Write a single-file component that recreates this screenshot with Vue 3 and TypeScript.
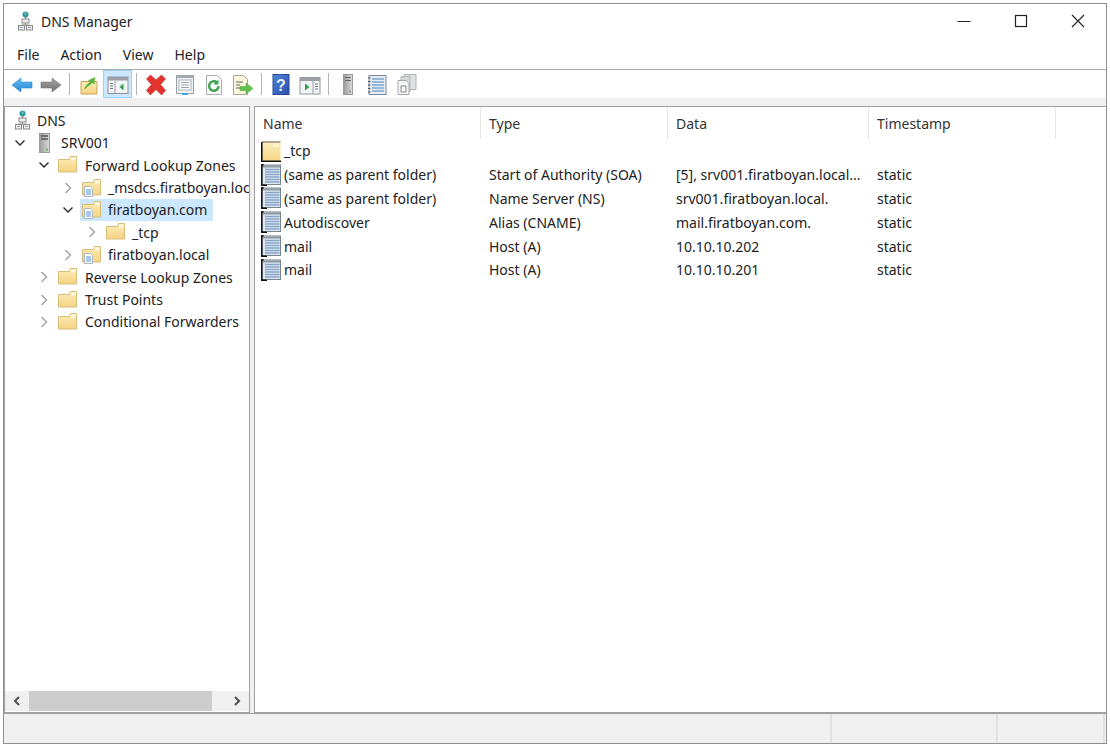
<script setup lang="ts">
interface TreeRow { level: number; chevron: '' | 'open' | 'closed'; icon: string; label: string; selected?: boolean }
interface Rec { icon: string; name: string; type: string; data: string; time: string }
type Tool = { id: string; active?: boolean } | { sep: true }

const menus = ['File', 'Action', 'View', 'Help']

const tools: Tool[] = [
  { id: 't-back' }, { id: 't-forward' }, { sep: true },
  { id: 't-up' }, { id: 't-tree', active: true }, { sep: true },
  { id: 't-delete' }, { id: 't-props' }, { id: 't-refresh' }, { id: 't-export' }, { sep: true },
  { id: 't-help' }, { id: 't-pane' }, { sep: true },
  { id: 't-server' }, { id: 't-list' }, { id: 't-copy' },
]

const tree: TreeRow[] = [
  { level: 0, chevron: '', icon: 'dns', label: 'DNS' },
  { level: 1, chevron: 'open', icon: 'server', label: 'SRV001' },
  { level: 2, chevron: 'open', icon: 'folder', label: 'Forward Lookup Zones' },
  { level: 3, chevron: 'closed', icon: 'zone', label: '_msdcs.firatboyan.local' },
  { level: 3, chevron: 'open', icon: 'zone', label: 'firatboyan.com', selected: true },
  { level: 4, chevron: 'closed', icon: 'folder', label: '_tcp' },
  { level: 3, chevron: 'closed', icon: 'zone', label: 'firatboyan.local' },
  { level: 2, chevron: 'closed', icon: 'folder', label: 'Reverse Lookup Zones' },
  { level: 2, chevron: 'closed', icon: 'folder', label: 'Trust Points' },
  { level: 2, chevron: 'closed', icon: 'folder', label: 'Conditional Forwarders' },
]

const columns = ['Name', 'Type', 'Data', 'Timestamp']

const records: Rec[] = [
  { icon: 'bigfolder', name: '_tcp', type: '', data: '', time: '' },
  { icon: 'record', name: '(same as parent folder)', type: 'Start of Authority (SOA)', data: '[5], srv001.firatboyan.local...', time: 'static' },
  { icon: 'record', name: '(same as parent folder)', type: 'Name Server (NS)', data: 'srv001.firatboyan.local.', time: 'static' },
  { icon: 'record', name: 'Autodiscover', type: 'Alias (CNAME)', data: 'mail.firatboyan.com.', time: 'static' },
  { icon: 'record', name: 'mail', type: 'Host (A)', data: '10.10.10.202', time: 'static' },
  { icon: 'record', name: 'mail', type: 'Host (A)', data: '10.10.10.201', time: 'static' },
]
</script>

<template>
  <div class="window">
    <svg class="defs" xmlns="http://www.w3.org/2000/svg">
      <defs>
        <linearGradient id="g-folder" x1="0" y1="0" x2="0" y2="1">
          <stop offset="0" stop-color="#fcecb8" /><stop offset="1" stop-color="#f5d483" />
        </linearGradient>
        <linearGradient id="g-blue" x1="0" y1="0" x2="0" y2="1">
          <stop offset="0" stop-color="#6cc0f2" /><stop offset="1" stop-color="#1f86d6" />
        </linearGradient>
        <linearGradient id="g-grey" x1="0" y1="0" x2="0" y2="1">
          <stop offset="0" stop-color="#a8a8a8" /><stop offset="1" stop-color="#6e6e6e" />
        </linearGradient>
        <linearGradient id="g-help" x1="0" y1="0" x2="1" y2="1">
          <stop offset="0" stop-color="#4f86dc" /><stop offset="1" stop-color="#2a4ea6" />
        </linearGradient>
        <linearGradient id="g-tower" x1="0" y1="0" x2="1" y2="0">
          <stop offset="0" stop-color="#9a9a9a" /><stop offset="1" stop-color="#dcdcdc" />
        </linearGradient>

        <symbol id="dns" viewBox="0 0 15 20">
          <circle cx="7.5" cy="3.4" r="3" fill="#2c93a3" />
          <path d="M5.5 1.6h4L7.5 5z" fill="#58c2a8" />
          <path d="M7.5 6v2" stroke="#9a8b6a" stroke-width="1.4" />
          <rect x="4" y="8" width="7" height="4" fill="#eee" stroke="#8a8a8a" />
          <path d="M7.5 12v2M3.500 14h8" stroke="#8a8a8a" fill="none" />
          <rect x="0.5" y="14.5" width="6" height="4.5" fill="#eee" stroke="#8a8a8a" />
          <rect x="8.5" y="14.5" width="6" height="4.5" fill="#eee" stroke="#8a8a8a" />
          <path d="M2 16.5h3M10 16.5h3" stroke="#8fa8b8" />
        </symbol>
        <symbol id="server" viewBox="0 0 20 20">
          <rect x="5.500" y="0.500" width="10" height="19" fill="url(#g-tower)" stroke="#9a9a9a" />
          <path d="M7 3h7M7 6h7" stroke="#555" stroke-width="1.3" />
          <circle cx="13" cy="16.500" r="1.100" fill="#56b947" />
        </symbol>
        <symbol id="folder" viewBox="0 0 20 20">
          <path d="M0.500 4.500h11l1-3h6v15.500H0.500z" fill="url(#g-folder)" stroke="#d8bd7a" />
          <path d="M13 2.500h5v3h-5z" fill="#fff8e2" />
        </symbol>
        <symbol id="zone" viewBox="0 0 20 20">
          <path d="M0.500 4.500h11l1-3h6v15.500H0.500z" fill="url(#g-folder)" stroke="#d8bd7a" />
          <path d="M13 2.500h5v3h-5z" fill="#fff8e2" />
          <path d="M2.500 8.500h6l2 2v8h-8z" fill="#fff" stroke="#aab4be" />
          <path d="M4 12h5M4 14h5M4 16h5" stroke="#4f93d0" />
        </symbol>
        <symbol id="bigfolder" viewBox="0 0 20 22">
          <path d="M0.800 21V3h18.700v18z" fill="url(#g-folder)" />
          <path d="M12 3h6v4h-6z" fill="#fff3c9" />
          <path d="M0.800 2v19.200H20" fill="none" stroke="#111" stroke-width="1.600" />
          <path d="M1 2h18.500" stroke="#5c4a20" />
        </symbol>
        <symbol id="record" viewBox="0 0 20 22">
          <rect x="1" y="1" width="18.500" height="19.500" fill="#dfe7f0" stroke="#77838f" />
          <path d="M1.500 2.500h17.500" stroke="#8f9aa5" stroke-width="2" />
          <path d="M4 5.500h14.500M4 8h14.500M4 10.500h14.500M4 13h14.500M4 15.500h14.500M4 18h14.500" stroke="#86a7c9" stroke-width="1.300" />
          <path d="M2.600 0.800H0.800v20.400H6" fill="none" stroke="#111" stroke-width="1.500" />
        </symbol>

        <symbol id="t-back" viewBox="0 0 22 22">
          <path d="M1 11l9-7v4h11v6H10v4z" fill="url(#g-blue)" stroke="#2b86cf" stroke-width="0.600" />
        </symbol>
        <symbol id="t-forward" viewBox="0 0 22 22">
          <path d="M21 11l-9-7v4H1v6h11v4z" fill="url(#g-grey)" stroke="#777" stroke-width="0.600" />
        </symbol>
        <symbol id="t-up" viewBox="0 0 22 22">
          <path d="M3 7.500h16v12.500H3z" fill="url(#g-folder)" stroke="#c7a557" />
          <path d="M6 16c1-4 3-6 6-8l-2-1.500 7-3.500-.5 7.500-2-1.500C12 11 9 13 6 16z" fill="#5fb53c" />
        </symbol>
        <symbol id="t-tree" viewBox="0 0 22 22">
          <rect x="1" y="3" width="20" height="16.500" fill="#f2f5f7" stroke="#8d949b" />
          <path d="M1 3h20v3.500H1z" fill="#9aa0a6" />
          <path d="M8 7v12.500" stroke="#9aa1a8" />
          <path d="M3 9.500h3M3 12h3M3 14.500h3" stroke="#778" />
          <path d="M16.500 9.500v7l-4-3.500z" fill="#2f9e44" />
        </symbol>
        <symbol id="t-delete" viewBox="0 0 22 22">
          <path d="M1.500 5l4-4L11 6 16.500 1l4 4L15.500 10.500l5 6-4 4.500L11 15.500 5.500 21l-4-4.500L6.500 10.500z" fill="#e2332c" stroke="#c22a24" stroke-width="0.600" stroke-linejoin="round" />
        </symbol>
        <symbol id="t-props" viewBox="0 0 22 22">
          <rect x="2.500" y="1.500" width="17" height="18" fill="#eef1f3" stroke="#9aa1a6" />
          <path d="M2.500 1.500h17v2.500h-17z" fill="#a6acb1" />
          <rect x="5" y="6" width="12" height="10" fill="#fff" stroke="#adb3b8" />
          <path d="M7 8.500h8M7 11h8M7 13.500h8" stroke="#98a2ac" />
          <rect x="8" y="19" width="6" height="2" fill="#39a7e0" />
        </symbol>
        <symbol id="t-refresh" viewBox="0 0 22 22">
          <path d="M3.500 1.500h11l4 4v15h-15z" fill="#fafafa" stroke="#a8aeb2" />
          <path d="M15.500 12a4.700 4.700 0 1 1-1.600-3.500" fill="none" stroke="#3fa551" stroke-width="2.400" />
          <path d="M15.500 5.500v5h-5z" fill="#3fa551" />
        </symbol>
        <symbol id="t-export" viewBox="0 0 22 22">
          <path d="M1.500 1.500h10l4 4v15h-14z" fill="#fbf6dc" stroke="#a8a894" />
          <path d="M4 8h7M4 11h4M4 14h4" stroke="#666" />
          <path d="M8 12.500h6V9l7 5.500-7 5.500v-3.500H8z" fill="#62bf52" stroke="#46a23d" stroke-width="0.500" />
        </symbol>
        <symbol id="t-help" viewBox="0 0 22 22">
          <rect x="3" y="0.500" width="16" height="20" fill="url(#g-help)" stroke="#2a4a98" />
          <text x="11" y="16.500" text-anchor="middle" font-family="Liberation Sans, sans-serif" font-weight="700" font-size="16" fill="#e8eefc">?</text>
        </symbol>
        <symbol id="t-pane" viewBox="0 0 22 22">
          <rect x="1" y="3.500" width="20" height="16.500" fill="#f2f5f7" stroke="#8d949b" />
          <path d="M1 3.500h20V7H1z" fill="#9aa0a6" />
          <path d="M14 7v13" stroke="#9aa1a8" />
          <path d="M16 10h3M16 12.500h3M16 15h3" stroke="#778" />
          <path d="M6 9.500v7l4.500-3.500z" fill="#2f9e44" />
        </symbol>
        <symbol id="t-server" viewBox="0 0 22 22">
          <rect x="6.500" y="0.500" width="9" height="20" fill="url(#g-tower)" stroke="#9a9a9a" />
          <path d="M8 3.500h6M8 6.500h6" stroke="#666" stroke-width="1.200" />
          <circle cx="13" cy="17.500" r="0.900" fill="#8a8a8a" />
        </symbol>
        <symbol id="t-list" viewBox="0 0 22 22">
          <rect x="3" y="1.500" width="17" height="19" fill="#e4edf6" stroke="#7a8b9c" />
          <path d="M6 5h12M6 8h12M6 11h12M6 14h12M6 17h12" stroke="#7ba4cc" stroke-width="1.300" />
          <path d="M2 4h2.500M2 7.500h2.500M2 11h2.500M2 14.500h2.500M2 18h2.500" stroke="#555" stroke-width="1.100" />
        </symbol>
        <symbol id="t-copy" viewBox="0 0 22 22">
          <path d="M9 0.500h12v15H9z" fill="#e0e2e3" stroke="#b0b4b7" />
          <path d="M6 2.500h9v15H6z" fill="#d6d8da" stroke="#b0b4b7" />
          <path d="M3 6.500h8l3 3v11H3z" fill="#f5f5f5" stroke="#a4a8ab" />
          <path d="M6 12h5v6H6z" fill="none" stroke="#8a8a8a" />
        </symbol>
      </defs>
    </svg>

    <header class="titlebar">
      <svg class="title-icon"><use href="#dns" /></svg>
      <span class="title">DNS Manager</span>
      <div class="win-controls">
        <svg class="ctl" viewBox="0 0 14 14"><path d="M0.500 7.500h13" stroke="#222" /></svg>
        <svg class="ctl" viewBox="0 0 14 14"><rect x="1.500" y="1.500" width="11" height="11" fill="none" stroke="#222" stroke-width="1.200" /></svg>
        <svg class="ctl" viewBox="0 0 14 14"><path d="M1 1l12 12M13 1L1 13" stroke="#222" stroke-width="1.100" /></svg>
      </div>
    </header>

    <nav class="menubar">
      <span v-for="m in menus" :key="m" class="menu">{{ m }}</span>
    </nav>

    <div class="toolbar">
      <template v-for="(t, i) in tools" :key="i">
        <span v-if="'sep' in t" class="sep"></span>
        <span v-else class="tool" :class="{ active: t.active }">
          <svg class="tool-icon"><use :href="'#' + t.id" /></svg>
        </span>
      </template>
    </div>

    <main class="panes">
      <aside class="left">
        <ul class="tree">
          <li v-for="r in tree" :key="r.label" class="tree-row" :class="'lvl-' + r.level">
            <span v-if="r.level > 0" class="chev">
              <svg v-if="r.chevron === 'open'" viewBox="0 0 10 10" class="chev-svg"><path d="M0.500 2.500L5 7l4.500-4.500" fill="none" stroke="#333" stroke-width="1.500" /></svg>
              <svg v-else viewBox="0 0 10 10" class="chev-svg"><path d="M2.500 0L7.500 5l-5 5" fill="none" stroke="#a6a6a6" stroke-width="1.500" /></svg>
            </span>
            <span class="node" :class="{ selected: r.selected }">
              <svg class="node-icon" :class="{ 'dns-icon': r.icon === 'dns' }"><use :href="'#' + r.icon" /></svg>
              <span class="node-label">{{ r.label }}</span>
            </span>
          </li>
        </ul>
        <div class="hscroll">
          <span class="sb-btn">
            <svg viewBox="0 0 10 10" class="sb-svg"><path d="M7 1L3 5l4 4" fill="none" stroke="#505050" stroke-width="2" /></svg>
          </span>
          <span class="sb-thumb"></span>
          <span class="sb-btn sb-end">
            <svg viewBox="0 0 10 10" class="sb-svg"><path d="M3 1l4 4-4 4" fill="none" stroke="#505050" stroke-width="2" /></svg>
          </span>
        </div>
      </aside>

      <section class="right">
        <div class="list-head">
          <span v-for="c in columns" :key="c" class="head-cell">{{ c }}</span>
        </div>
        <div v-for="(r, i) in records" :key="i" class="list-row">
          <span class="cell name-cell">
            <svg class="rec-icon"><use :href="'#' + r.icon" /></svg>
            <span>{{ r.name }}</span>
          </span>
          <span class="cell">{{ r.type }}</span>
          <span class="cell">{{ r.data }}</span>
          <span class="cell">{{ r.time }}</span>
        </div>
      </section>
    </main>

    <footer class="statusbar">
      <span class="st st-main"></span>
      <span class="st st-mid"></span>
      <span class="st st-end"></span>
    </footer>
  </div>
</template>

<style>
html, body { margin: 0; background: #fff; }
</style>

<style scoped>
.window {
  box-sizing: border-box;
  width: 1104px;
  height: 741px;
  margin: 3px 0 0 3px;
  border: 1px solid #8f8f8f;
  background: #fff;
  display: flex;
  flex-direction: column;
  font-family: "Noto Sans", "Open Sans", sans-serif;
  font-size: 14px;
  color: #222;
  overflow: hidden;
}
.defs { display: block; width: 0; height: 0; }

.titlebar { height: 34px; flex: none; display: flex; align-items: center; padding-left: 14px; }
.title-icon { width: 15px; height: 20px; flex: none; }
.title { margin-left: 8px; }
.win-controls { margin-left: auto; display: flex; gap: 43px; padding-right: 21px; }
.ctl { width: 14px; height: 14px; display: block; }

.menubar { flex: none; display: flex; align-items: center; padding: 2px 0 0 13px; gap: 21px; border-bottom: 1px solid #a9a9a9; box-sizing: border-box; height: 32px; }

.toolbar { height: 28px; flex: none; display: flex; align-items: stretch; padding-left: 3px; }
.tool { width: 29px; display: flex; align-items: center; justify-content: center; box-sizing: border-box; padding-top: 2px; }
.tool.active { background: #cce8ff; box-shadow: inset 0 0 0 1px #99d1ff; }
.tool-icon { width: 22px; height: 22px; }
.sep { width: 9px; display: flex; justify-content: center; padding: 3px 0; box-sizing: border-box; }
.sep::before { content: ""; width: 1px; background: #b4b4b4; }

.panes { flex: 1; min-height: 0; display: flex; gap: 4px; background: #f0f0f0; padding-top: 8px; }
.left, .right { background: #fff; border: 1px solid #a0a0a0; box-sizing: border-box; }
.left { width: 246px; flex: none; display: flex; flex-direction: column; }
.right { flex: 1; border-right: 0; min-width: 0; }

.tree { flex: 1; min-height: 0; list-style: none; margin: 0; padding: 2.200px 0 0; overflow: hidden; }
.tree-row { height: 22.400px; display: flex; align-items: center; white-space: nowrap; }
.lvl-0 { padding-left: 10px; }
.lvl-1 { padding-left: 10px; }
.lvl-2 { padding-left: 34px; }
.lvl-3 { padding-left: 58px; }
.lvl-4 { padding-left: 82px; }
.chev { width: 19px; flex: none; display: flex; }
.chev-svg { width: 10px; height: 10px; display: block; }
.node { display: flex; align-items: center; height: 100%; padding: 0 6px 0 2px; margin-left: -2px; }
.node.selected { background: #cce8ff; }
.node-icon { width: 20px; height: 20px; flex: none; margin-right: 6px; }
.lvl-1 .node-icon, .lvl-2 .node-icon { margin-right: 7px; }
.lvl-0 .dns-icon { width: 15px; margin-right: 7px; }
.hscroll { height: 20px; flex: none; margin-bottom: 1px; background: #f0f0f0; display: flex; align-items: stretch; }
.sb-btn { width: 24px; display: flex; align-items: center; justify-content: center; flex: none; }
.sb-end { margin-left: auto; }
.sb-svg { width: 10px; height: 10px; }
.sb-thumb { width: 183px; background: #cdcdcd; flex: none; }

.list-head { display: grid; grid-template-columns: 226px 187px 201px 187px; height: 32px; }
.head-cell { border-right: 1px solid #e5e5e5; display: flex; align-items: center; padding-left: 8px; color: #333; box-sizing: border-box; }
.list-row { display: grid; grid-template-columns: 226px 187px 201px 187px; height: 23.800px; }
.cell { display: flex; align-items: center; padding-left: 8px; white-space: nowrap; overflow: hidden; box-sizing: border-box; }
.name-cell { padding-left: 6px; }
.rec-icon { width: 20px; height: 22px; flex: none; margin-right: 3px; }

.statusbar { flex: none; display: flex; background: #f0f0f0; border-top: 1px solid #a0a0a0; box-sizing: border-box; height: 30px; }
.st { border-right: 2px solid #e2e2e2; box-sizing: border-box; }
.st-main { width: 828px; }
.st-mid { width: 166px; }
.st-end { width: 107px; }
</style>
